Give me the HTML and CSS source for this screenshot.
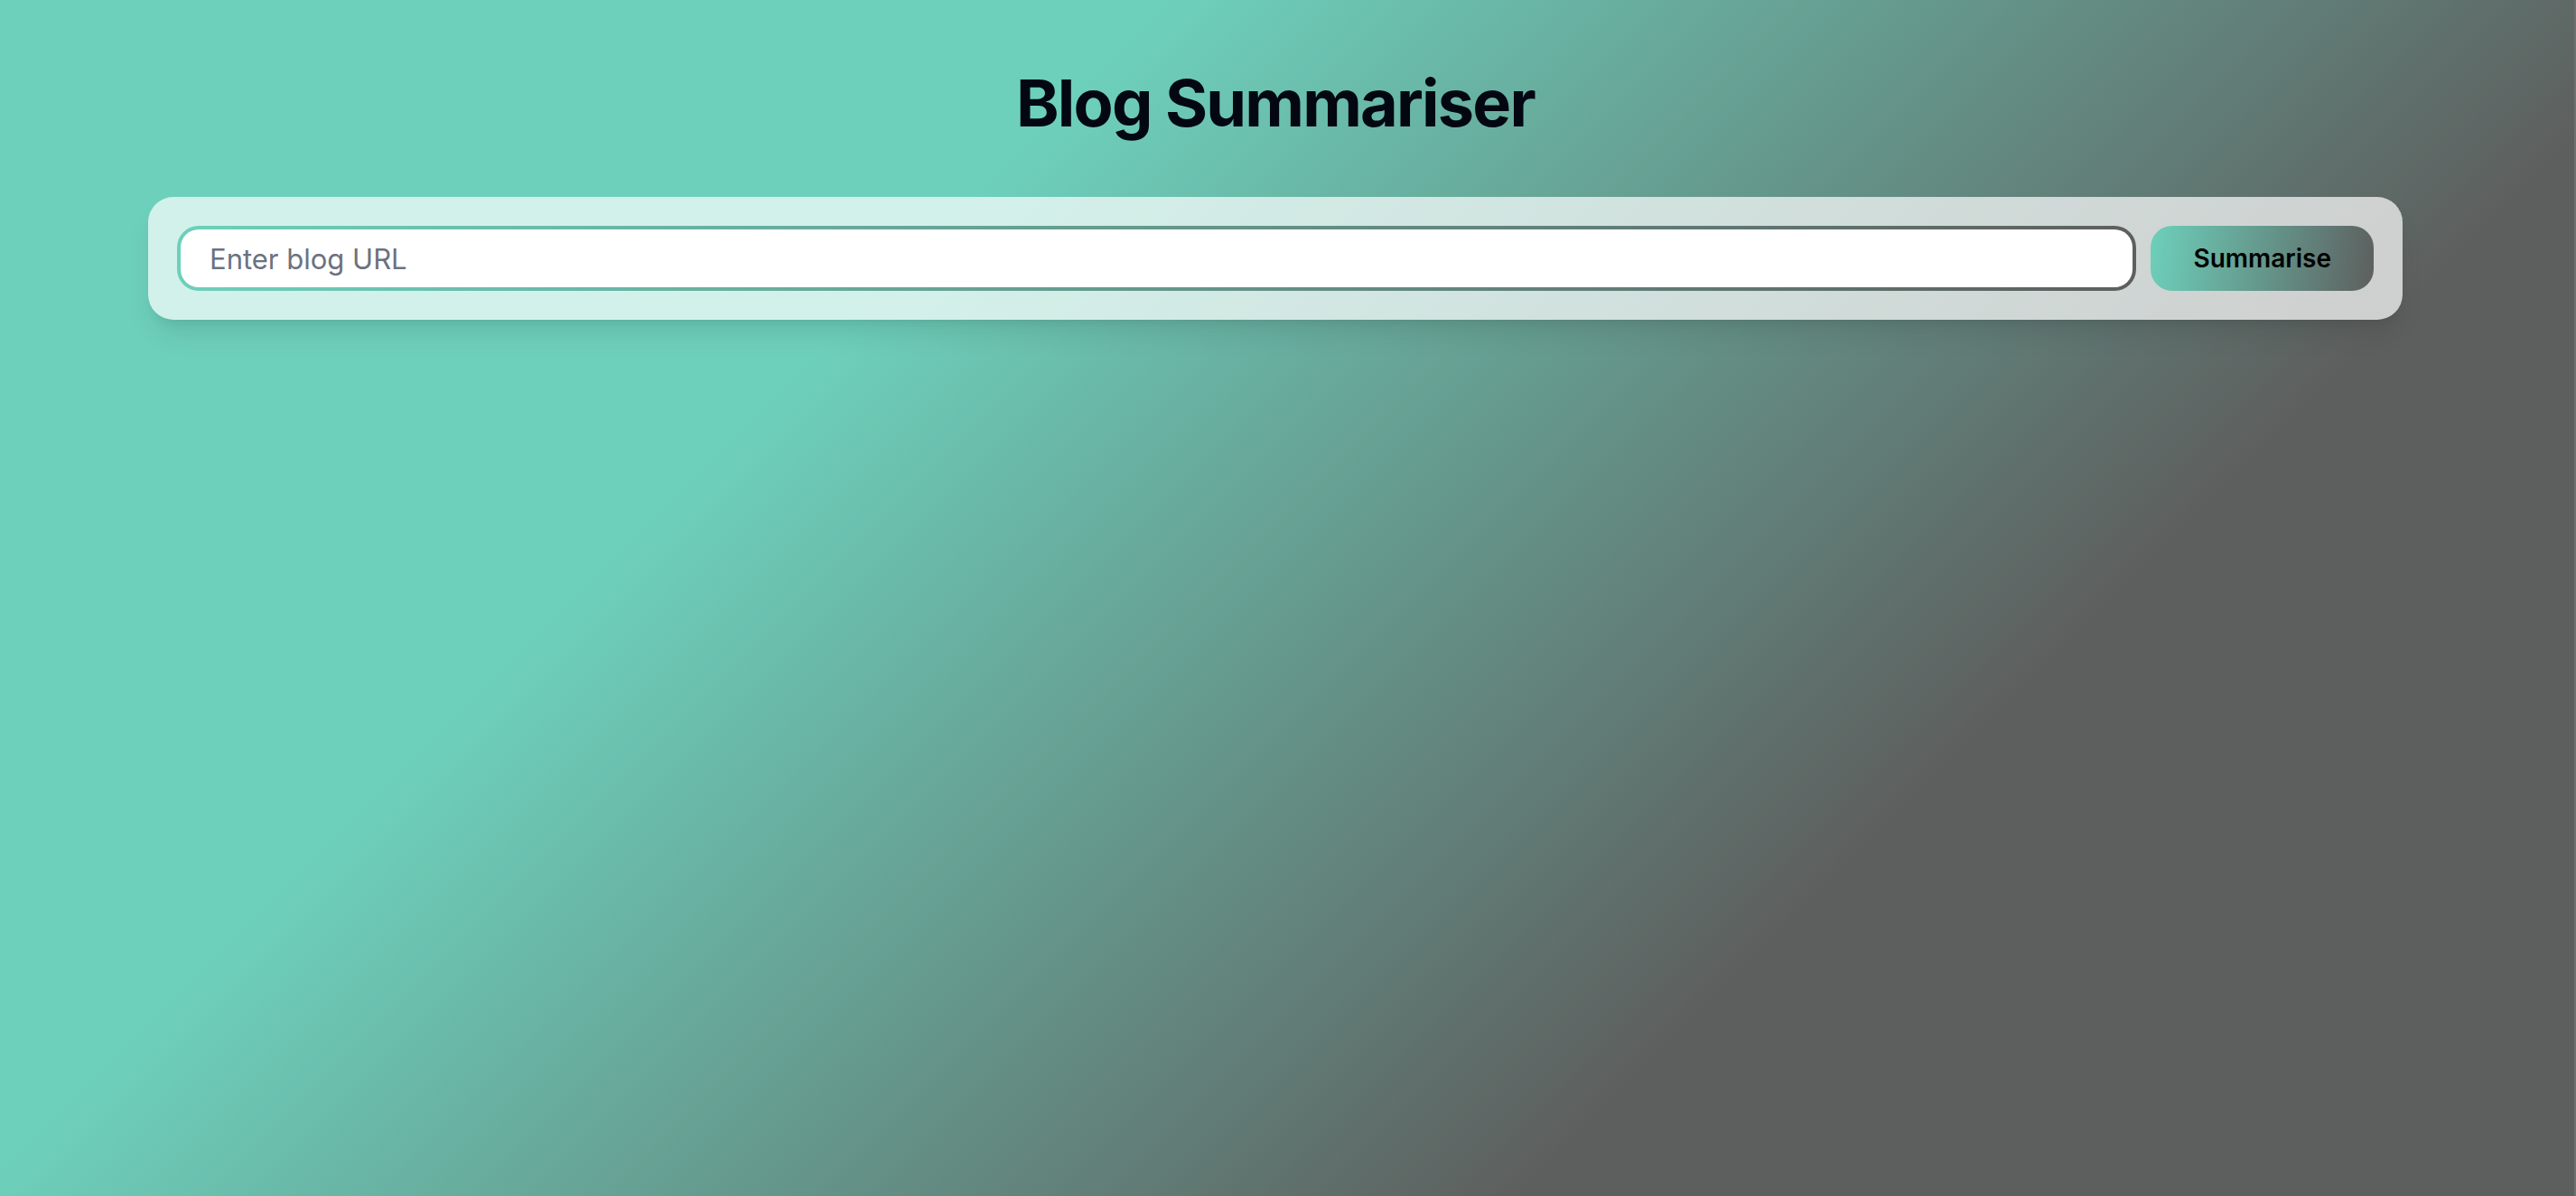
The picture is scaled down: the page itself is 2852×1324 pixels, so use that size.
FILE: index.html
```html
<!DOCTYPE html>
<html lang="en">
<head>
<meta charset="utf-8">
<title>Blog Summariser</title>
<link rel="stylesheet" href="styles.css">
</head>
<body>
<main class="page">
  <h1 class="title">Blog Summariser</h1>
  <form class="card">
    <input class="url-input" type="url" placeholder="Enter blog URL" aria-label="Blog URL">
    <button class="submit" type="button">Summarise</button>
  </form>
</main>
</body>
</html>
```
FILE: styles.css
```css
:root {
  --mint: #6dd0bb;
  --grey: #5d5f5e;
}

* {
  box-sizing: border-box;
}

body {
  margin: 0;
  font-family: Inter, "Liberation Sans", sans-serif;
  color: #030712;
  background: #6f706f;
}

.page {
  min-height: 100vh;
  margin-right: 2px;
  padding: 66px 190px 64px 164px;
  background: linear-gradient(135deg, var(--mint) 31%, var(--grey) 72%);
}

.title {
  margin: 0 0 56px;
  font-size: 72px;
  line-height: 96px;
  font-weight: 700;
  letter-spacing: -0.025em;
  text-align: center;
}

.card {
  display: flex;
  gap: 16px;
  padding: 32px;
  border-radius: 28px;
  background: rgba(255, 255, 255, 0.7);
  box-shadow: 0 20px 30px -6px rgba(0, 0, 0, 0.1), 0 8px 12px -8px rgba(0, 0, 0, 0.1);
}

.url-input {
  flex: 1;
  min-width: 0;
  height: 72px;
  padding: 0 32px;
  border: 4px solid transparent;
  border-radius: 24px;
  font: 400 31px/48px Inter, "Liberation Sans", sans-serif;
  color: #030712;
  background:
    linear-gradient(#fff, #fff) padding-box,
    linear-gradient(97deg, var(--mint), var(--grey)) border-box;
}

.url-input::placeholder {
  color: #6b7280;
  opacity: 1;
}

.submit {
  height: 72px;
  padding: 0 47px;
  border: 0;
  border-radius: 24px;
  font: 600 28px/40px Inter, "Liberation Sans", sans-serif;
  color: #000;
  background: linear-gradient(97deg, var(--mint), var(--grey));
}
```
